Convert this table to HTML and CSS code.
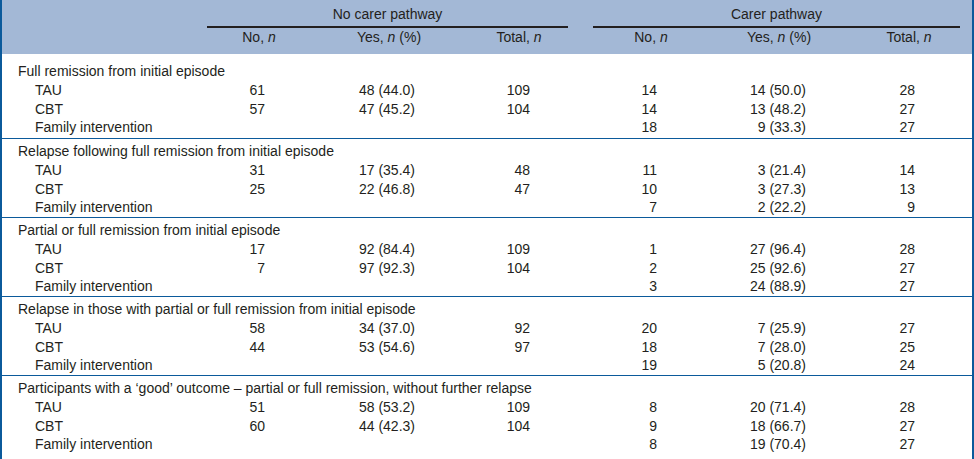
FILE: index.html
```html
<!DOCTYPE html>
<html lang="en">
<head>
<meta charset="utf-8">
<title>Remission and relapse by pathway</title>
<link rel="stylesheet" href="styles.css">
</head>
<body>
<div class="table">
  <div class="head">
    <div class="hrow spanners">
      <div class="sp-no">No carer pathway</div>
      <div class="sp-carer">Carer pathway</div>
    </div>
    <div class="hrow subheads">
      <div class="h1">No, <i>n</i></div>
      <div>Yes, <i>n</i> (%)</div>
      <div>Total, <i>n</i></div>
      <div class="h4">No, <i>n</i></div>
      <div>Yes, <i>n</i> (%)</div>
      <div>Total, <i>n</i></div>
    </div>
  </div>

  <div class="section first">
    <div class="title">Full remission from initial episode</div>
    <div class="row"><span class="label">TAU</span><span>61</span><span>48 (44.0)</span><span>109</span><span>14</span><span>14 (50.0)</span><span>28</span></div>
    <div class="row"><span class="label">CBT</span><span>57</span><span>47 (45.2)</span><span>104</span><span>14</span><span>13 (48.2)</span><span>27</span></div>
    <div class="row"><span class="label">Family intervention</span><span></span><span></span><span></span><span>18</span><span>9 (33.3)</span><span>27</span></div>
  </div>

  <div class="section">
    <div class="title">Relapse following full remission from initial episode</div>
    <div class="row"><span class="label">TAU</span><span>31</span><span>17 (35.4)</span><span>48</span><span>11</span><span>3 (21.4)</span><span>14</span></div>
    <div class="row"><span class="label">CBT</span><span>25</span><span>22 (46.8)</span><span>47</span><span>10</span><span>3 (27.3)</span><span>13</span></div>
    <div class="row"><span class="label">Family intervention</span><span></span><span></span><span></span><span>7</span><span>2 (22.2)</span><span>9</span></div>
  </div>

  <div class="section">
    <div class="title">Partial or full remission from initial episode</div>
    <div class="row"><span class="label">TAU</span><span>17</span><span>92 (84.4)</span><span>109</span><span>1</span><span>27 (96.4)</span><span>28</span></div>
    <div class="row"><span class="label">CBT</span><span>7</span><span>97 (92.3)</span><span>104</span><span>2</span><span>25 (92.6)</span><span>27</span></div>
    <div class="row"><span class="label">Family intervention</span><span></span><span></span><span></span><span>3</span><span>24 (88.9)</span><span>27</span></div>
  </div>

  <div class="section">
    <div class="title">Relapse in those with partial or full remission from initial episode</div>
    <div class="row"><span class="label">TAU</span><span>58</span><span>34 (37.0)</span><span>92</span><span>20</span><span>7 (25.9)</span><span>27</span></div>
    <div class="row"><span class="label">CBT</span><span>44</span><span>53 (54.6)</span><span>97</span><span>18</span><span>7 (28.0)</span><span>25</span></div>
    <div class="row"><span class="label">Family intervention</span><span></span><span></span><span></span><span>19</span><span>5 (20.8)</span><span>24</span></div>
  </div>

  <div class="section">
    <div class="title">Participants with a ‘good’ outcome – partial or full remission, without further relapse</div>
    <div class="row"><span class="label">TAU</span><span>51</span><span>58 (53.2)</span><span>109</span><span>8</span><span>20 (71.4)</span><span>28</span></div>
    <div class="row"><span class="label">CBT</span><span>60</span><span>44 (42.3)</span><span>104</span><span>9</span><span>18 (66.7)</span><span>27</span></div>
    <div class="row"><span class="label">Family intervention</span><span></span><span></span><span></span><span>8</span><span>19 (70.4)</span><span>27</span></div>
  </div>
</div>
</body>
</html>
```

FILE: styles.css
```css
* {
  box-sizing: border-box;
  margin: 0;
  padding: 0;
}

body {
  margin: 0;
  background: #ffffff;
  color: #231f20;
  font-family: "Liberation Sans", Arial, sans-serif;
  font-size: 14px;
}

.table {
  width: 974px;
  min-height: 459px;
  border-left: 2px solid #0b5a9b;
  border-right: 2px solid #0b5a9b;
}

.head {
  background: #a3b8d6;
  padding: 5px 0 7.25px;
}

.hrow,
.row {
  display: grid;
  grid-template-columns: 205px 104px 156px 104px 22px 116px 140px 120px 3px;
  line-height: 18.75px;
}

.spanners > div {
  text-align: center;
  padding-bottom: 2.25px;
  border-bottom: 2px solid #231f20;
}

.spanners .sp-no {
  grid-column: 2 / 5;
  margin-right: 3px;
}

.spanners .sp-carer {
  grid-column: 6 / 9;
  margin-right: 9px;
}

.subheads > div {
  text-align: center;
}

.subheads .h1 {
  grid-column: 2;
}

.subheads .h4 {
  grid-column: 6;
}

.section {
  border-top: 1px solid #0b5a9b;
  padding-top: 3px;
}

.section.first {
  border-top: 0;
  padding-top: 8px;
  padding-bottom: 1px;
}

.title {
  padding-left: 16px;
  line-height: 18.75px;
  white-space: nowrap;
}

.row > span {
  text-align: right;
  white-space: nowrap;
}

.row > .label {
  text-align: left;
  padding-left: 33px;
}

.row > :nth-child(2) { padding-right: 46px; }
.row > :nth-child(3) { padding-right: 52px; }
.row > :nth-child(4) { padding-right: 41px; }
.row > :nth-child(5) { grid-column: 6; padding-right: 52px; }
.row > :nth-child(6) { padding-right: 43px; }
.row > :nth-child(7) { padding-right: 54px; }
```
